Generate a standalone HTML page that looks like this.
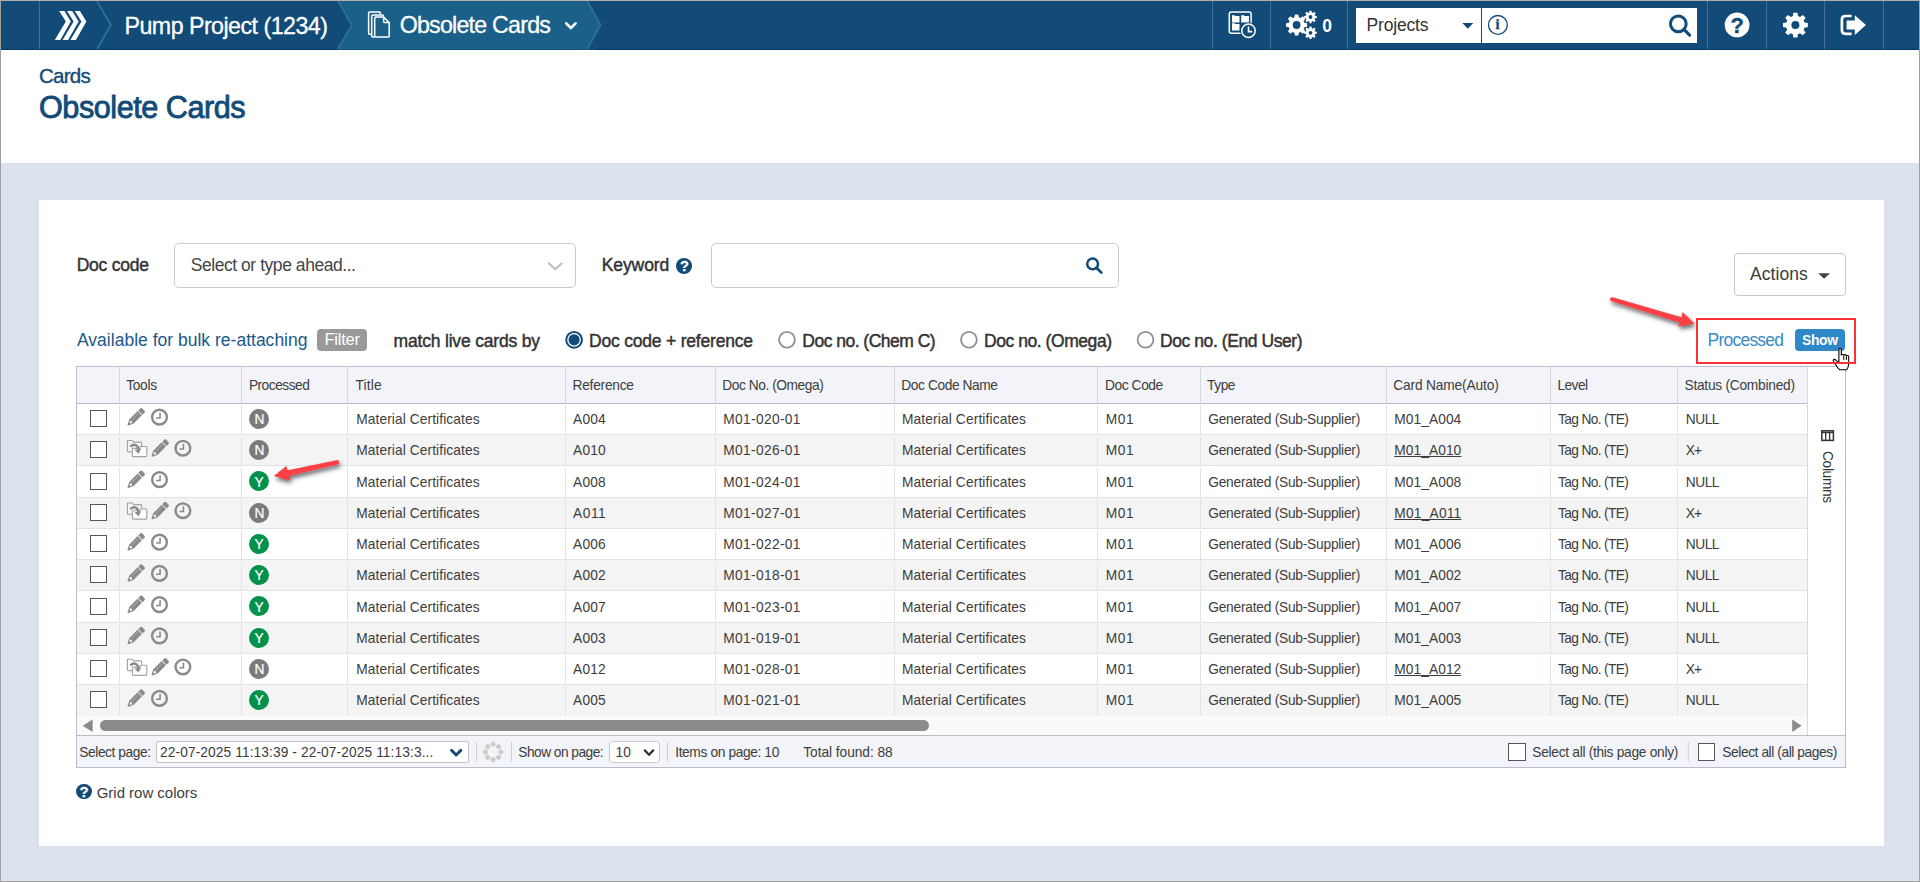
<!DOCTYPE html>
<html><head><meta charset="utf-8"><title>Obsolete Cards</title>
<style>
html,body{margin:0;padding:0}
body{width:1920px;height:882px;position:relative;overflow:hidden;background:#dbe2ee;font-family:"Liberation Sans",sans-serif;}
.a{position:absolute;box-sizing:border-box}
.t{position:absolute;white-space:nowrap;font-family:"Liberation Sans",sans-serif}
svg{position:absolute;overflow:visible}
</style></head><body>

<div class="a " style="left:0px;top:0px;width:1920px;height:50px;background:#124b78;border-bottom:1px solid #003a6b;"></div>
<div class="a " style="left:39px;top:1px;width:1px;height:48px;background:#456d8f;"></div>
<div class="a " style="left:1212px;top:1px;width:1px;height:48px;background:#456d8f;"></div>
<div class="a " style="left:1270px;top:1px;width:1px;height:48px;background:#456d8f;"></div>
<div class="a " style="left:1347px;top:1px;width:1px;height:48px;background:#456d8f;"></div>
<div class="a " style="left:1707px;top:1px;width:1px;height:48px;background:#456d8f;"></div>
<div class="a " style="left:1766px;top:1px;width:1px;height:48px;background:#456d8f;"></div>
<div class="a " style="left:1824px;top:1px;width:1px;height:48px;background:#456d8f;"></div>
<div class="a " style="left:1883px;top:1px;width:1px;height:48px;background:#456d8f;"></div>
<svg width="1920" height="50" style="left:0;top:0" viewBox="0 0 1920 50"><polygon points="338,1 587.2,1 600.5,25 587.2,49 338,49 351.8,25" fill="#1a6088"/><rect x="345" y="49" width="250" height="1" fill="#0d537f"/><polygon points="338,49 338,50 587.5,50 588,49" fill="#0d537f"/><polyline points="97,1 110.8,25 97,49" fill="none" stroke="#2d709e" stroke-width="1.8" stroke-linejoin="round"/><polyline points="338,1 351.8,25 338,49" fill="none" stroke="#2d709e" stroke-width="1.8" stroke-linejoin="round"/><polyline points="587.2,1 600.5,25 587.2,49" fill="none" stroke="#2d709e" stroke-width="1.8" stroke-linejoin="round"/><polygon points="59.20,10.90 64.40,10.90 70.80,21.60 60.30,40.00 54.80,40.00 65.80,21.60" fill="#fff"/><polygon points="67.00,10.90 72.20,10.90 78.60,21.60 68.10,40.00 62.60,40.00 73.60,21.60" fill="#fff"/><polygon points="74.80,10.90 80.00,10.90 86.40,21.60 75.90,40.00 70.40,40.00 81.40,21.60" fill="#fff"/><path d="M370.9 34.2 H369.6 Q368.6 34.2 368.6 33.2 V12.9 Q368.6 11.9 369.6 11.9 H379.4 Q380.4 11.9 380.4 12.9 V13.6" fill="none" stroke="#fff" stroke-width="1.5" stroke-linejoin="round" stroke-linecap="round"/><path d="M374 36.9 H372.7 Q371.7 36.9 371.7 35.9 V15.9 Q371.7 14.9 372.7 14.9 H382.4 Q383.4 14.9 383.4 15.9 V16.2" fill="none" stroke="#fff" stroke-width="1.5" stroke-linejoin="round" stroke-linecap="round"/><path d="M375.7 17 H383.6 L389.2 22.6 V36.1 Q389.2 37.1 388.2 37.1 H375.7 Q374.7 37.1 374.7 36.1 V18 Q374.7 17 375.7 17 Z M383.6 17 V21.6 Q383.6 22.6 384.6 22.6 H389.2" fill="none" stroke="#fff" stroke-width="1.5" stroke-linejoin="round" stroke-linecap="round"/><polyline points="566.2,23.3 570.9,28 575.6,23.3" fill="none" stroke="#fff" stroke-width="2.6" stroke-linecap="round" stroke-linejoin="round"/><rect x="1229.3" y="12" width="21.8" height="21.2" rx="2" ry="2" fill="none" stroke="#fff" stroke-width="1.5"/><path d="M1232 15.2 h2.6 l0.8 0.8 h4.1 v6.4 h-7.5 Z" fill="#fff"/><path d="M1241.2 15.2 h2.6 l0.8 0.8 h4.4 v6.4 h-7.8 Z" fill="#fff"/><path d="M1232 23.3 h2.6 l0.8 0.8 h4.1 v6.4 h-7.5 Z" fill="#fff"/><circle cx="1248.5" cy="30.8" r="8.4" fill="#124b78"/><circle cx="1248.5" cy="30.8" r="6.7" fill="#124b78" stroke="#fff" stroke-width="1.5"/><polyline points="1248.5,26.6 1248.5,31.6 1252.2,31.6" fill="none" stroke="#fff" stroke-width="1.6"/><path d="M1304.40 22.82 L1307.16 23.29 L1307.16 26.71 L1304.40 27.18 L1303.66 28.98 L1305.28 31.26 L1302.86 33.68 L1300.58 32.06 L1298.78 32.80 L1298.31 35.56 L1294.89 35.56 L1294.42 32.80 L1292.62 32.06 L1290.34 33.68 L1287.92 31.26 L1289.54 28.98 L1288.80 27.18 L1286.04 26.71 L1286.04 23.29 L1288.80 22.82 L1289.54 21.02 L1287.92 18.74 L1290.34 16.32 L1292.62 17.94 L1294.42 17.20 L1294.89 14.44 L1298.31 14.44 L1298.78 17.20 L1300.58 17.94 L1302.86 16.32 L1305.28 18.74 L1303.66 21.02Z M1292.70 25.00 a3.90 3.90 0 1 0 7.80 0 a3.90 3.90 0 1 0 -7.80 0Z" fill="#fff" fill-rule="evenodd"/><path d="M1315.03 15.74 L1316.82 15.98 L1316.82 18.02 L1315.03 18.26 L1314.59 19.31 L1315.69 20.74 L1314.24 22.19 L1312.81 21.09 L1311.76 21.53 L1311.52 23.32 L1309.48 23.32 L1309.24 21.53 L1308.19 21.09 L1306.76 22.19 L1305.31 20.74 L1306.41 19.31 L1305.97 18.26 L1304.18 18.02 L1304.18 15.98 L1305.97 15.74 L1306.41 14.69 L1305.31 13.26 L1306.76 11.81 L1308.19 12.91 L1309.24 12.47 L1309.48 10.68 L1311.52 10.68 L1311.76 12.47 L1312.81 12.91 L1314.24 11.81 L1315.69 13.26 L1314.59 14.69Z M1308.60 17.00 a1.90 1.90 0 1 0 3.80 0 a1.90 1.90 0 1 0 -3.80 0Z" fill="#fff" fill-rule="evenodd"/><path d="M1315.03 31.54 L1316.82 31.78 L1316.82 33.82 L1315.03 34.06 L1314.59 35.11 L1315.69 36.54 L1314.24 37.99 L1312.81 36.89 L1311.76 37.33 L1311.52 39.12 L1309.48 39.12 L1309.24 37.33 L1308.19 36.89 L1306.76 37.99 L1305.31 36.54 L1306.41 35.11 L1305.97 34.06 L1304.18 33.82 L1304.18 31.78 L1305.97 31.54 L1306.41 30.49 L1305.31 29.06 L1306.76 27.61 L1308.19 28.71 L1309.24 28.27 L1309.48 26.48 L1311.52 26.48 L1311.76 28.27 L1312.81 28.71 L1314.24 27.61 L1315.69 29.06 L1314.59 30.49Z M1308.60 32.80 a1.90 1.90 0 1 0 3.80 0 a1.90 1.90 0 1 0 -3.80 0Z" fill="#fff" fill-rule="evenodd"/><rect x="1356" y="8" width="125" height="35" fill="#fff"/><rect x="1482" y="8" width="215" height="35" fill="#fff"/><polygon points="1462.3,23 1473.3,23 1467.8,28.8" fill="#124b78"/><circle cx="1497.9" cy="24.9" r="9.4" fill="none" stroke="#124b78" stroke-width="1.3"/><circle cx="1678.3" cy="23.8" r="7.9" fill="none" stroke="#124b78" stroke-width="3"/><line x1="1684.4" y1="29.9" x2="1689.6" y2="35.1" stroke="#124b78" stroke-width="3.2" stroke-linecap="round"/><circle cx="1737.1" cy="24.9" r="12.4" fill="#fff"/><path d="M1804.45 22.57 L1807.84 23.08 L1807.84 27.12 L1804.45 27.63 L1803.59 29.72 L1805.62 32.47 L1802.77 35.32 L1800.02 33.29 L1797.93 34.15 L1797.42 37.54 L1793.38 37.54 L1792.87 34.15 L1790.78 33.29 L1788.03 35.32 L1785.18 32.47 L1787.21 29.72 L1786.35 27.63 L1782.96 27.12 L1782.96 23.08 L1786.35 22.57 L1787.21 20.48 L1785.18 17.73 L1788.03 14.88 L1790.78 16.91 L1792.87 16.05 L1793.38 12.66 L1797.42 12.66 L1797.93 16.05 L1800.02 16.91 L1802.77 14.88 L1805.62 17.73 L1803.59 20.48Z M1791.40 25.10 a4.00 4.00 0 1 0 8.00 0 a4.00 4.00 0 1 0 -8.00 0Z" fill="#fff" fill-rule="evenodd"/><path d="M1851.6 16 H1845.4 Q1841.9 16 1841.9 19.5 V30.3 Q1841.9 33.8 1845.4 33.8 H1851.6" fill="none" stroke="#fff" stroke-width="2.7"/><polygon points="1846.6,20.4 1854.8,20.4 1854.8,15.2 1866,25 1854.8,34.9 1854.8,29.4 1846.6,29.4" fill="#fff"/></svg>
<span class="t " style="left:124.50px;top:10.56px;font-size:23.20px;line-height:30px;color:#fff;letter-spacing:-0.515px;-webkit-text-stroke:0.30px #fff;">Pump Project (1234)</span>
<span class="t " style="left:399.70px;top:10.46px;font-size:23.20px;line-height:30px;color:#fff;letter-spacing:-0.761px;-webkit-text-stroke:0.30px #fff;">Obsolete Cards</span>
<span class="t " style="left:1322.30px;top:15.24px;font-size:17.50px;line-height:23px;color:#fff;font-weight:bold;">0</span>
<span class="t " style="left:1366.60px;top:14.24px;font-size:17.50px;line-height:23px;color:#333;letter-spacing:-0.202px;">Projects</span>
<span class="t " style="left:1495.50px;top:14.98px;font-size:14.50px;line-height:19px;color:#124b78;font-weight:bold;-webkit-text-stroke:0.30px #124b78;font-family:'Liberation Serif',serif;">i</span>
<span class="t " style="left:1730.60px;top:10.68px;font-size:22.00px;line-height:29px;color:#124b78;font-weight:bold;-webkit-text-stroke:0.40px #124b78;">?</span>
<div class="a " style="left:0px;top:50px;width:1920px;height:113px;background:#fff;"></div>
<span class="t " style="left:39.00px;top:61.86px;font-size:20.60px;line-height:27px;color:#124b78;letter-spacing:-0.813px;-webkit-text-stroke:0.35px #124b78;">Cards</span>
<span class="t " style="left:39.00px;top:87.20px;font-size:30.60px;line-height:40px;color:#124b78;letter-spacing:-0.454px;-webkit-text-stroke:0.85px #124b78;">Obsolete Cards</span>
<div class="a " style="left:39px;top:200px;width:1845px;height:646px;background:#fff;"></div>
<span class="t " style="left:76.70px;top:254.44px;font-size:17.50px;line-height:23px;color:#333;letter-spacing:-0.233px;-webkit-text-stroke:0.45px #333;">Doc code</span>
<div class="a " style="left:174px;top:243px;width:402px;height:45px;border:1px solid #ccc;border-radius:5px;background:#fff;"></div>
<span class="t " style="left:190.70px;top:254.44px;font-size:17.50px;line-height:23px;color:#444;letter-spacing:-0.446px;">Select or type ahead...</span>
<svg width="20" height="12" style="left:546px;top:260px" viewBox="546 260 20 12"><polyline points="548.8,263.3 555.3,269.3 561.8,263.3" fill="none" stroke="#bcbcbc" stroke-width="1.9" stroke-linecap="round" stroke-linejoin="round"/></svg>
<span class="t " style="left:601.70px;top:254.34px;font-size:17.50px;line-height:23px;color:#333;letter-spacing:-0.081px;-webkit-text-stroke:0.45px #333;">Keyword</span>
<div class="a " style="left:676px;top:257.8px;width:16.2px;height:15.8px;border-radius:50%;background:#124b78;"></div>
<span class="t " style="left:680.00px;top:256.54px;font-size:14.60px;line-height:19px;color:#fff;font-weight:bold;-webkit-text-stroke:0.30px #fff;">?</span>
<div class="a " style="left:711px;top:243px;width:408px;height:45px;border:1px solid #ccc;border-radius:5px;background:#fff;"></div>
<svg width="24" height="24" style="left:1082px;top:254px" viewBox="1082 254 24 24"><circle cx="1092.6" cy="263.9" r="5.4" fill="none" stroke="#124b78" stroke-width="2.5"/><line x1="1096.9" y1="268.2" x2="1101.4" y2="272.6" stroke="#124b78" stroke-width="2.7" stroke-linecap="round"/></svg>
<div class="a " style="left:1734px;top:253px;width:112px;height:43px;border:1px solid #c8c8c8;border-radius:4px;background:#fff;"></div>
<span class="t " style="left:1750.00px;top:263.14px;font-size:17.50px;line-height:23px;color:#3c3c3c;letter-spacing:0.052px;">Actions</span>
<svg width="14" height="8" style="left:1817px;top:272px" viewBox="1817 272 14 8"><polygon points="1818.2,273.3 1830,273.3 1824.1,278.8" fill="#444"/></svg>
<span class="t " style="left:77.00px;top:329.24px;font-size:17.50px;line-height:23px;color:#1a598a;letter-spacing:0.009px;">Available for bulk re-attaching</span>
<div class="a " style="left:317px;top:329px;width:50px;height:22px;background:#999;border-radius:4px;"></div>
<span class="t " style="left:324.50px;top:329.15px;font-size:16.60px;line-height:22px;color:#fff;letter-spacing:-0.278px;">Filter</span>
<span class="t " style="left:393.50px;top:330.14px;font-size:17.50px;line-height:23px;color:#333;letter-spacing:-0.182px;-webkit-text-stroke:0.45px #333;">match live cards by</span>
<svg width="760" height="24" style="left:560px;top:328px" viewBox="560 328 760 24"><circle cx="574.1" cy="339.8" r="7.9" fill="#fff" stroke="#124b78" stroke-width="2"/><circle cx="574.1" cy="339.8" r="5.6" fill="#124b78"/><circle cx="787.0" cy="339.8" r="7.9" fill="#fff" stroke="#8e8e9c" stroke-width="1.8"/><circle cx="968.9" cy="339.8" r="7.9" fill="#fff" stroke="#8e8e9c" stroke-width="1.8"/><circle cx="1145.5" cy="339.8" r="7.9" fill="#fff" stroke="#8e8e9c" stroke-width="1.8"/></svg>
<span class="t " style="left:589.00px;top:330.14px;font-size:17.50px;line-height:23px;color:#333;letter-spacing:-0.200px;-webkit-text-stroke:0.45px #333;">Doc code + reference</span>
<span class="t " style="left:802.30px;top:330.14px;font-size:17.50px;line-height:23px;color:#333;letter-spacing:-0.514px;-webkit-text-stroke:0.45px #333;">Doc no. (Chem C)</span>
<span class="t " style="left:984.00px;top:330.14px;font-size:17.50px;line-height:23px;color:#333;letter-spacing:-0.444px;-webkit-text-stroke:0.45px #333;">Doc no. (Omega)</span>
<span class="t " style="left:1160.00px;top:330.14px;font-size:17.50px;line-height:23px;color:#333;letter-spacing:-0.428px;-webkit-text-stroke:0.45px #333;">Doc no. (End User)</span>
<span class="t " style="left:1707.60px;top:328.64px;font-size:17.50px;line-height:23px;color:#3a8ac6;letter-spacing:-0.785px;">Processed</span>
<div class="a " style="left:1795px;top:329px;width:50px;height:22.2px;background:#2f88c8;border-radius:4px;"></div>
<span class="t " style="left:1802.00px;top:332.12px;font-size:13.80px;line-height:18px;color:#fff;letter-spacing:-0.266px;font-weight:bold;">Show</span>
<div class="a " style="left:76px;top:366px;width:1770px;height:402px;border:1px solid #b6becc;background:#fff;"></div>
<div class="a " style="left:77px;top:367px;width:1730px;height:36px;background:#f2f4f9;"></div>
<div class="a " style="left:77px;top:403px;width:1730px;height:1px;background:#b6becc;"></div>
<span class="t " style="left:126.25px;top:377.24px;font-size:13.75px;line-height:18px;color:#3d3d3d;letter-spacing:-0.337px;">Tools</span>
<span class="t " style="left:248.90px;top:377.24px;font-size:13.75px;line-height:18px;color:#3d3d3d;letter-spacing:-0.508px;">Processed</span>
<span class="t " style="left:355.50px;top:377.24px;font-size:13.75px;line-height:18px;color:#3d3d3d;letter-spacing:0.196px;">Title</span>
<span class="t " style="left:572.50px;top:377.24px;font-size:13.75px;line-height:18px;color:#3d3d3d;letter-spacing:-0.243px;">Reference</span>
<span class="t " style="left:722.30px;top:377.24px;font-size:13.75px;line-height:18px;color:#3d3d3d;letter-spacing:-0.446px;">Doc No. (Omega)</span>
<span class="t " style="left:901.25px;top:377.24px;font-size:13.75px;line-height:18px;color:#3d3d3d;letter-spacing:-0.408px;">Doc Code Name</span>
<span class="t " style="left:1105.00px;top:377.24px;font-size:13.75px;line-height:18px;color:#3d3d3d;letter-spacing:-0.414px;">Doc Code</span>
<span class="t " style="left:1207.00px;top:377.24px;font-size:13.75px;line-height:18px;color:#3d3d3d;letter-spacing:-0.437px;">Type</span>
<span class="t " style="left:1393.25px;top:377.24px;font-size:13.75px;line-height:18px;color:#3d3d3d;letter-spacing:-0.161px;">Card Name(Auto)</span>
<span class="t " style="left:1557.50px;top:377.24px;font-size:13.75px;line-height:18px;color:#3d3d3d;letter-spacing:-0.593px;">Level</span>
<span class="t " style="left:1684.50px;top:377.24px;font-size:13.75px;line-height:18px;color:#3d3d3d;letter-spacing:-0.259px;">Status (Combined)</span>
<div class="a " style="left:77px;top:403.75px;width:1730px;height:31.25px;background:#fff;border-bottom:1px solid #dfe4ec;"></div>
<div class="a " style="left:90px;top:410.15px;width:17px;height:17px;border:1px solid #55555b;background:#fff;"></div>
<svg width="26" height="26" style="left:123px;top:405px" viewBox="0 0 26 26"><g transform="translate(12.80 12.20) rotate(45)" fill="#8a8a8a"><path d="M-3 -6.5 V-9.5 Q-3 -10.7 -1.8 -10.7 H1.8 Q3 -10.7 3 -9.5 V-6.5 Z"/><path d="M-3 -5.6 H3 V6.0 L0.7 11.0 Q0 11.8 -0.7 11.0 L-3 6.0 Z"/><line x1="-1.0" y1="-4.8" x2="-1.0" y2="5.0" stroke="#c4c4c4" stroke-width="0.6"/><path d="M-1.5 6.6 L0 5.8 L1.5 6.6 L0 8.8 Z" fill="#fff"/></g></svg>
<svg width="20" height="20" style="left:150px;top:408px" viewBox="0 0 20 20"><g transform="translate(0.50 0.15)"><circle cx="9" cy="9" r="7.35" fill="none" stroke="#8a8a8a" stroke-width="2.4"/><polyline points="9.55,4.5 9.55,9.8 5.6,9.8" fill="none" stroke="#8a8a8a" stroke-width="1.6"/></g></svg>
<div class="a " style="left:249px;top:408.85px;width:20px;height:20px;border-radius:50%;background:#7b7b7b;"></div>
<span class="t " style="left:254.40px;top:411.09px;font-size:13.75px;line-height:18px;color:#fff;-webkit-text-stroke:0.20px #fff;">N</span>
<span class="t " style="left:356.25px;top:411.24px;font-size:13.75px;line-height:18px;color:#3d3d3d;letter-spacing:0.088px;">Material Certificates</span>
<span class="t " style="left:573.00px;top:411.24px;font-size:13.75px;line-height:18px;color:#3d3d3d;letter-spacing:0.212px;">A004</span>
<span class="t " style="left:723.25px;top:411.24px;font-size:13.75px;line-height:18px;color:#3d3d3d;letter-spacing:0.345px;">M01-020-01</span>
<span class="t " style="left:902.00px;top:411.24px;font-size:13.75px;line-height:18px;color:#3d3d3d;letter-spacing:0.125px;">Material Certificates</span>
<span class="t " style="left:1105.75px;top:411.24px;font-size:13.75px;line-height:18px;color:#3d3d3d;letter-spacing:0.625px;">M01</span>
<span class="t " style="left:1208.20px;top:411.24px;font-size:13.75px;line-height:18px;color:#3d3d3d;letter-spacing:-0.233px;">Generated (Sub-Supplier)</span>
<span class="t " style="left:1394.25px;top:411.24px;font-size:13.75px;line-height:18px;color:#3d3d3d;letter-spacing:0.070px;">M01_A004</span>
<span class="t " style="left:1558.00px;top:411.24px;font-size:13.75px;line-height:18px;color:#3d3d3d;letter-spacing:-0.653px;">Tag No. (TE)</span>
<span class="t " style="left:1685.75px;top:411.24px;font-size:13.75px;line-height:18px;color:#3d3d3d;letter-spacing:-0.468px;">NULL</span>
<div class="a " style="left:77px;top:435px;width:1730px;height:31.25px;background:#f4f4f4;border-bottom:1px solid #dfe4ec;"></div>
<div class="a " style="left:90px;top:441.4px;width:17px;height:17px;border:1px solid #55555b;background:#fff;"></div>
<svg width="24" height="20" style="left:126px;top:439px" viewBox="0 0 24 20"><g transform="translate(0.80 0.90)"><path d="M5.6 11.9 H1.4 Q0.6 11.9 0.6 11.1 V1.4 Q0.6 0.6 1.4 0.6 H5.6 L6.9 2.2 H14 Q14.8 2.2 14.8 3 V6" fill="none" stroke="#a3a3a3" stroke-width="1.15"/><path d="M6.4 8.4 H12.6 L13.9 6.6 H19.2 Q20 6.6 20 7.4 V15.9 Q20 16.7 19.2 16.7 H6.4 Q5.6 16.7 5.6 15.9 V9.2 Q5.6 8.4 6.4 8.4Z" fill="#fff" fill-opacity="0.9" stroke="#a3a3a3" stroke-width="1.15"/><path d="M3.6 6.9 Q6.2 3.6 9.6 5.6 Q11.4 7 11.6 9.6" fill="none" stroke="#8a8a8a" stroke-width="2.5"/><path d="M7.7 10.1 L14.5 8.7 L11.7 13.9 Z" fill="#8a8a8a"/></g></svg>
<svg width="26" height="26" style="left:147px;top:436px" viewBox="0 0 26 26"><g transform="translate(12.80 12.45) rotate(45)" fill="#8a8a8a"><path d="M-3 -6.5 V-9.5 Q-3 -10.7 -1.8 -10.7 H1.8 Q3 -10.7 3 -9.5 V-6.5 Z"/><path d="M-3 -5.6 H3 V6.0 L0.7 11.0 Q0 11.8 -0.7 11.0 L-3 6.0 Z"/><line x1="-1.0" y1="-4.8" x2="-1.0" y2="5.0" stroke="#c4c4c4" stroke-width="0.6"/><path d="M-1.5 6.6 L0 5.8 L1.5 6.6 L0 8.8 Z" fill="#fff"/></g></svg>
<svg width="20" height="20" style="left:173px;top:439px" viewBox="0 0 20 20"><g transform="translate(0.90 0.20)"><circle cx="9" cy="9" r="7.35" fill="none" stroke="#8a8a8a" stroke-width="2.4"/><polyline points="9.55,4.5 9.55,9.8 5.6,9.8" fill="none" stroke="#8a8a8a" stroke-width="1.6"/></g></svg>
<div class="a " style="left:249px;top:440.1px;width:20px;height:20px;border-radius:50%;background:#7b7b7b;"></div>
<span class="t " style="left:254.40px;top:442.34px;font-size:13.75px;line-height:18px;color:#fff;-webkit-text-stroke:0.20px #fff;">N</span>
<span class="t " style="left:356.25px;top:442.49px;font-size:13.75px;line-height:18px;color:#3d3d3d;letter-spacing:0.088px;">Material Certificates</span>
<span class="t " style="left:573.00px;top:442.49px;font-size:13.75px;line-height:18px;color:#3d3d3d;letter-spacing:0.212px;">A010</span>
<span class="t " style="left:723.25px;top:442.49px;font-size:13.75px;line-height:18px;color:#3d3d3d;letter-spacing:0.345px;">M01-026-01</span>
<span class="t " style="left:902.00px;top:442.49px;font-size:13.75px;line-height:18px;color:#3d3d3d;letter-spacing:0.125px;">Material Certificates</span>
<span class="t " style="left:1105.75px;top:442.49px;font-size:13.75px;line-height:18px;color:#3d3d3d;letter-spacing:0.625px;">M01</span>
<span class="t " style="left:1208.20px;top:442.49px;font-size:13.75px;line-height:18px;color:#3d3d3d;letter-spacing:-0.233px;">Generated (Sub-Supplier)</span>
<span class="t " style="left:1394.25px;top:442.49px;font-size:13.75px;line-height:18px;color:#3d3d3d;letter-spacing:0.070px;text-decoration:underline;text-underline-offset:0.6px;text-decoration-thickness:1px;">M01_A010</span>
<span class="t " style="left:1558.00px;top:442.49px;font-size:13.75px;line-height:18px;color:#3d3d3d;letter-spacing:-0.653px;">Tag No. (TE)</span>
<span class="t " style="left:1685.75px;top:442.49px;font-size:13.75px;line-height:18px;color:#3d3d3d;letter-spacing:-0.951px;">X+</span>
<div class="a " style="left:77px;top:466.25px;width:1730px;height:31.25px;background:#fff;border-bottom:1px solid #dfe4ec;"></div>
<div class="a " style="left:90px;top:472.65px;width:17px;height:17px;border:1px solid #55555b;background:#fff;"></div>
<svg width="26" height="26" style="left:123px;top:467px" viewBox="0 0 26 26"><g transform="translate(12.80 12.70) rotate(45)" fill="#8a8a8a"><path d="M-3 -6.5 V-9.5 Q-3 -10.7 -1.8 -10.7 H1.8 Q3 -10.7 3 -9.5 V-6.5 Z"/><path d="M-3 -5.6 H3 V6.0 L0.7 11.0 Q0 11.8 -0.7 11.0 L-3 6.0 Z"/><line x1="-1.0" y1="-4.8" x2="-1.0" y2="5.0" stroke="#c4c4c4" stroke-width="0.6"/><path d="M-1.5 6.6 L0 5.8 L1.5 6.6 L0 8.8 Z" fill="#fff"/></g></svg>
<svg width="20" height="20" style="left:150px;top:470px" viewBox="0 0 20 20"><g transform="translate(0.50 0.65)"><circle cx="9" cy="9" r="7.35" fill="none" stroke="#8a8a8a" stroke-width="2.4"/><polyline points="9.55,4.5 9.55,9.8 5.6,9.8" fill="none" stroke="#8a8a8a" stroke-width="1.6"/></g></svg>
<div class="a " style="left:249px;top:471.35px;width:20px;height:20px;border-radius:50%;background:#00914a;"></div>
<span class="t " style="left:254.60px;top:473.59px;font-size:13.75px;line-height:18px;color:#fff;-webkit-text-stroke:0.20px #fff;">Y</span>
<span class="t " style="left:356.25px;top:473.74px;font-size:13.75px;line-height:18px;color:#3d3d3d;letter-spacing:0.088px;">Material Certificates</span>
<span class="t " style="left:573.00px;top:473.74px;font-size:13.75px;line-height:18px;color:#3d3d3d;letter-spacing:0.212px;">A008</span>
<span class="t " style="left:723.25px;top:473.74px;font-size:13.75px;line-height:18px;color:#3d3d3d;letter-spacing:0.345px;">M01-024-01</span>
<span class="t " style="left:902.00px;top:473.74px;font-size:13.75px;line-height:18px;color:#3d3d3d;letter-spacing:0.125px;">Material Certificates</span>
<span class="t " style="left:1105.75px;top:473.74px;font-size:13.75px;line-height:18px;color:#3d3d3d;letter-spacing:0.625px;">M01</span>
<span class="t " style="left:1208.20px;top:473.74px;font-size:13.75px;line-height:18px;color:#3d3d3d;letter-spacing:-0.233px;">Generated (Sub-Supplier)</span>
<span class="t " style="left:1394.25px;top:473.74px;font-size:13.75px;line-height:18px;color:#3d3d3d;letter-spacing:0.070px;">M01_A008</span>
<span class="t " style="left:1558.00px;top:473.74px;font-size:13.75px;line-height:18px;color:#3d3d3d;letter-spacing:-0.653px;">Tag No. (TE)</span>
<span class="t " style="left:1685.75px;top:473.74px;font-size:13.75px;line-height:18px;color:#3d3d3d;letter-spacing:-0.468px;">NULL</span>
<div class="a " style="left:77px;top:497.5px;width:1730px;height:31.25px;background:#f4f4f4;border-bottom:1px solid #dfe4ec;"></div>
<div class="a " style="left:90px;top:503.9px;width:17px;height:17px;border:1px solid #55555b;background:#fff;"></div>
<svg width="24" height="20" style="left:126px;top:502px" viewBox="0 0 24 20"><g transform="translate(0.80 0.40)"><path d="M5.6 11.9 H1.4 Q0.6 11.9 0.6 11.1 V1.4 Q0.6 0.6 1.4 0.6 H5.6 L6.9 2.2 H14 Q14.8 2.2 14.8 3 V6" fill="none" stroke="#a3a3a3" stroke-width="1.15"/><path d="M6.4 8.4 H12.6 L13.9 6.6 H19.2 Q20 6.6 20 7.4 V15.9 Q20 16.7 19.2 16.7 H6.4 Q5.6 16.7 5.6 15.9 V9.2 Q5.6 8.4 6.4 8.4Z" fill="#fff" fill-opacity="0.9" stroke="#a3a3a3" stroke-width="1.15"/><path d="M3.6 6.9 Q6.2 3.6 9.6 5.6 Q11.4 7 11.6 9.6" fill="none" stroke="#8a8a8a" stroke-width="2.5"/><path d="M7.7 10.1 L14.5 8.7 L11.7 13.9 Z" fill="#8a8a8a"/></g></svg>
<svg width="26" height="26" style="left:147px;top:498px" viewBox="0 0 26 26"><g transform="translate(12.80 12.95) rotate(45)" fill="#8a8a8a"><path d="M-3 -6.5 V-9.5 Q-3 -10.7 -1.8 -10.7 H1.8 Q3 -10.7 3 -9.5 V-6.5 Z"/><path d="M-3 -5.6 H3 V6.0 L0.7 11.0 Q0 11.8 -0.7 11.0 L-3 6.0 Z"/><line x1="-1.0" y1="-4.8" x2="-1.0" y2="5.0" stroke="#c4c4c4" stroke-width="0.6"/><path d="M-1.5 6.6 L0 5.8 L1.5 6.6 L0 8.8 Z" fill="#fff"/></g></svg>
<svg width="20" height="20" style="left:173px;top:501px" viewBox="0 0 20 20"><g transform="translate(0.90 0.70)"><circle cx="9" cy="9" r="7.35" fill="none" stroke="#8a8a8a" stroke-width="2.4"/><polyline points="9.55,4.5 9.55,9.8 5.6,9.8" fill="none" stroke="#8a8a8a" stroke-width="1.6"/></g></svg>
<div class="a " style="left:249px;top:502.6px;width:20px;height:20px;border-radius:50%;background:#7b7b7b;"></div>
<span class="t " style="left:254.40px;top:504.84px;font-size:13.75px;line-height:18px;color:#fff;-webkit-text-stroke:0.20px #fff;">N</span>
<span class="t " style="left:356.25px;top:504.99px;font-size:13.75px;line-height:18px;color:#3d3d3d;letter-spacing:0.088px;">Material Certificates</span>
<span class="t " style="left:573.00px;top:504.99px;font-size:13.75px;line-height:18px;color:#3d3d3d;letter-spacing:0.552px;">A011</span>
<span class="t " style="left:723.25px;top:504.99px;font-size:13.75px;line-height:18px;color:#3d3d3d;letter-spacing:0.345px;">M01-027-01</span>
<span class="t " style="left:902.00px;top:504.99px;font-size:13.75px;line-height:18px;color:#3d3d3d;letter-spacing:0.125px;">Material Certificates</span>
<span class="t " style="left:1105.75px;top:504.99px;font-size:13.75px;line-height:18px;color:#3d3d3d;letter-spacing:0.625px;">M01</span>
<span class="t " style="left:1208.20px;top:504.99px;font-size:13.75px;line-height:18px;color:#3d3d3d;letter-spacing:-0.233px;">Generated (Sub-Supplier)</span>
<span class="t " style="left:1394.25px;top:504.99px;font-size:13.75px;line-height:18px;color:#3d3d3d;letter-spacing:0.216px;text-decoration:underline;text-underline-offset:0.6px;text-decoration-thickness:1px;">M01_A011</span>
<span class="t " style="left:1558.00px;top:504.99px;font-size:13.75px;line-height:18px;color:#3d3d3d;letter-spacing:-0.653px;">Tag No. (TE)</span>
<span class="t " style="left:1685.75px;top:504.99px;font-size:13.75px;line-height:18px;color:#3d3d3d;letter-spacing:-0.951px;">X+</span>
<div class="a " style="left:77px;top:528.75px;width:1730px;height:31.25px;background:#fff;border-bottom:1px solid #dfe4ec;"></div>
<div class="a " style="left:90px;top:535.15px;width:17px;height:17px;border:1px solid #55555b;background:#fff;"></div>
<svg width="26" height="26" style="left:123px;top:530px" viewBox="0 0 26 26"><g transform="translate(12.80 12.20) rotate(45)" fill="#8a8a8a"><path d="M-3 -6.5 V-9.5 Q-3 -10.7 -1.8 -10.7 H1.8 Q3 -10.7 3 -9.5 V-6.5 Z"/><path d="M-3 -5.6 H3 V6.0 L0.7 11.0 Q0 11.8 -0.7 11.0 L-3 6.0 Z"/><line x1="-1.0" y1="-4.8" x2="-1.0" y2="5.0" stroke="#c4c4c4" stroke-width="0.6"/><path d="M-1.5 6.6 L0 5.8 L1.5 6.6 L0 8.8 Z" fill="#fff"/></g></svg>
<svg width="20" height="20" style="left:150px;top:533px" viewBox="0 0 20 20"><g transform="translate(0.50 0.15)"><circle cx="9" cy="9" r="7.35" fill="none" stroke="#8a8a8a" stroke-width="2.4"/><polyline points="9.55,4.5 9.55,9.8 5.6,9.8" fill="none" stroke="#8a8a8a" stroke-width="1.6"/></g></svg>
<div class="a " style="left:249px;top:533.85px;width:20px;height:20px;border-radius:50%;background:#00914a;"></div>
<span class="t " style="left:254.60px;top:536.09px;font-size:13.75px;line-height:18px;color:#fff;-webkit-text-stroke:0.20px #fff;">Y</span>
<span class="t " style="left:356.25px;top:536.24px;font-size:13.75px;line-height:18px;color:#3d3d3d;letter-spacing:0.088px;">Material Certificates</span>
<span class="t " style="left:573.00px;top:536.24px;font-size:13.75px;line-height:18px;color:#3d3d3d;letter-spacing:0.212px;">A006</span>
<span class="t " style="left:723.25px;top:536.24px;font-size:13.75px;line-height:18px;color:#3d3d3d;letter-spacing:0.345px;">M01-022-01</span>
<span class="t " style="left:902.00px;top:536.24px;font-size:13.75px;line-height:18px;color:#3d3d3d;letter-spacing:0.125px;">Material Certificates</span>
<span class="t " style="left:1105.75px;top:536.24px;font-size:13.75px;line-height:18px;color:#3d3d3d;letter-spacing:0.625px;">M01</span>
<span class="t " style="left:1208.20px;top:536.24px;font-size:13.75px;line-height:18px;color:#3d3d3d;letter-spacing:-0.233px;">Generated (Sub-Supplier)</span>
<span class="t " style="left:1394.25px;top:536.24px;font-size:13.75px;line-height:18px;color:#3d3d3d;letter-spacing:0.070px;">M01_A006</span>
<span class="t " style="left:1558.00px;top:536.24px;font-size:13.75px;line-height:18px;color:#3d3d3d;letter-spacing:-0.653px;">Tag No. (TE)</span>
<span class="t " style="left:1685.75px;top:536.24px;font-size:13.75px;line-height:18px;color:#3d3d3d;letter-spacing:-0.468px;">NULL</span>
<div class="a " style="left:77px;top:560px;width:1730px;height:31.25px;background:#f4f4f4;border-bottom:1px solid #dfe4ec;"></div>
<div class="a " style="left:90px;top:566.4px;width:17px;height:17px;border:1px solid #55555b;background:#fff;"></div>
<svg width="26" height="26" style="left:123px;top:561px" viewBox="0 0 26 26"><g transform="translate(12.80 12.45) rotate(45)" fill="#8a8a8a"><path d="M-3 -6.5 V-9.5 Q-3 -10.7 -1.8 -10.7 H1.8 Q3 -10.7 3 -9.5 V-6.5 Z"/><path d="M-3 -5.6 H3 V6.0 L0.7 11.0 Q0 11.8 -0.7 11.0 L-3 6.0 Z"/><line x1="-1.0" y1="-4.8" x2="-1.0" y2="5.0" stroke="#c4c4c4" stroke-width="0.6"/><path d="M-1.5 6.6 L0 5.8 L1.5 6.6 L0 8.8 Z" fill="#fff"/></g></svg>
<svg width="20" height="20" style="left:150px;top:564px" viewBox="0 0 20 20"><g transform="translate(0.50 0.40)"><circle cx="9" cy="9" r="7.35" fill="none" stroke="#8a8a8a" stroke-width="2.4"/><polyline points="9.55,4.5 9.55,9.8 5.6,9.8" fill="none" stroke="#8a8a8a" stroke-width="1.6"/></g></svg>
<div class="a " style="left:249px;top:565.1px;width:20px;height:20px;border-radius:50%;background:#00914a;"></div>
<span class="t " style="left:254.60px;top:567.34px;font-size:13.75px;line-height:18px;color:#fff;-webkit-text-stroke:0.20px #fff;">Y</span>
<span class="t " style="left:356.25px;top:567.49px;font-size:13.75px;line-height:18px;color:#3d3d3d;letter-spacing:0.088px;">Material Certificates</span>
<span class="t " style="left:573.00px;top:567.49px;font-size:13.75px;line-height:18px;color:#3d3d3d;letter-spacing:0.212px;">A002</span>
<span class="t " style="left:723.25px;top:567.49px;font-size:13.75px;line-height:18px;color:#3d3d3d;letter-spacing:0.345px;">M01-018-01</span>
<span class="t " style="left:902.00px;top:567.49px;font-size:13.75px;line-height:18px;color:#3d3d3d;letter-spacing:0.125px;">Material Certificates</span>
<span class="t " style="left:1105.75px;top:567.49px;font-size:13.75px;line-height:18px;color:#3d3d3d;letter-spacing:0.625px;">M01</span>
<span class="t " style="left:1208.20px;top:567.49px;font-size:13.75px;line-height:18px;color:#3d3d3d;letter-spacing:-0.233px;">Generated (Sub-Supplier)</span>
<span class="t " style="left:1394.25px;top:567.49px;font-size:13.75px;line-height:18px;color:#3d3d3d;letter-spacing:0.070px;">M01_A002</span>
<span class="t " style="left:1558.00px;top:567.49px;font-size:13.75px;line-height:18px;color:#3d3d3d;letter-spacing:-0.653px;">Tag No. (TE)</span>
<span class="t " style="left:1685.75px;top:567.49px;font-size:13.75px;line-height:18px;color:#3d3d3d;letter-spacing:-0.468px;">NULL</span>
<div class="a " style="left:77px;top:591.25px;width:1730px;height:31.25px;background:#fff;border-bottom:1px solid #dfe4ec;"></div>
<div class="a " style="left:90px;top:597.65px;width:17px;height:17px;border:1px solid #55555b;background:#fff;"></div>
<svg width="26" height="26" style="left:123px;top:592px" viewBox="0 0 26 26"><g transform="translate(12.80 12.70) rotate(45)" fill="#8a8a8a"><path d="M-3 -6.5 V-9.5 Q-3 -10.7 -1.8 -10.7 H1.8 Q3 -10.7 3 -9.5 V-6.5 Z"/><path d="M-3 -5.6 H3 V6.0 L0.7 11.0 Q0 11.8 -0.7 11.0 L-3 6.0 Z"/><line x1="-1.0" y1="-4.8" x2="-1.0" y2="5.0" stroke="#c4c4c4" stroke-width="0.6"/><path d="M-1.5 6.6 L0 5.8 L1.5 6.6 L0 8.8 Z" fill="#fff"/></g></svg>
<svg width="20" height="20" style="left:150px;top:595px" viewBox="0 0 20 20"><g transform="translate(0.50 0.65)"><circle cx="9" cy="9" r="7.35" fill="none" stroke="#8a8a8a" stroke-width="2.4"/><polyline points="9.55,4.5 9.55,9.8 5.6,9.8" fill="none" stroke="#8a8a8a" stroke-width="1.6"/></g></svg>
<div class="a " style="left:249px;top:596.35px;width:20px;height:20px;border-radius:50%;background:#00914a;"></div>
<span class="t " style="left:254.60px;top:598.59px;font-size:13.75px;line-height:18px;color:#fff;-webkit-text-stroke:0.20px #fff;">Y</span>
<span class="t " style="left:356.25px;top:598.74px;font-size:13.75px;line-height:18px;color:#3d3d3d;letter-spacing:0.088px;">Material Certificates</span>
<span class="t " style="left:573.00px;top:598.74px;font-size:13.75px;line-height:18px;color:#3d3d3d;letter-spacing:0.212px;">A007</span>
<span class="t " style="left:723.25px;top:598.74px;font-size:13.75px;line-height:18px;color:#3d3d3d;letter-spacing:0.345px;">M01-023-01</span>
<span class="t " style="left:902.00px;top:598.74px;font-size:13.75px;line-height:18px;color:#3d3d3d;letter-spacing:0.125px;">Material Certificates</span>
<span class="t " style="left:1105.75px;top:598.74px;font-size:13.75px;line-height:18px;color:#3d3d3d;letter-spacing:0.625px;">M01</span>
<span class="t " style="left:1208.20px;top:598.74px;font-size:13.75px;line-height:18px;color:#3d3d3d;letter-spacing:-0.233px;">Generated (Sub-Supplier)</span>
<span class="t " style="left:1394.25px;top:598.74px;font-size:13.75px;line-height:18px;color:#3d3d3d;letter-spacing:0.070px;">M01_A007</span>
<span class="t " style="left:1558.00px;top:598.74px;font-size:13.75px;line-height:18px;color:#3d3d3d;letter-spacing:-0.653px;">Tag No. (TE)</span>
<span class="t " style="left:1685.75px;top:598.74px;font-size:13.75px;line-height:18px;color:#3d3d3d;letter-spacing:-0.468px;">NULL</span>
<div class="a " style="left:77px;top:622.5px;width:1730px;height:31.25px;background:#f4f4f4;border-bottom:1px solid #dfe4ec;"></div>
<div class="a " style="left:90px;top:628.9px;width:17px;height:17px;border:1px solid #55555b;background:#fff;"></div>
<svg width="26" height="26" style="left:123px;top:623px" viewBox="0 0 26 26"><g transform="translate(12.80 12.95) rotate(45)" fill="#8a8a8a"><path d="M-3 -6.5 V-9.5 Q-3 -10.7 -1.8 -10.7 H1.8 Q3 -10.7 3 -9.5 V-6.5 Z"/><path d="M-3 -5.6 H3 V6.0 L0.7 11.0 Q0 11.8 -0.7 11.0 L-3 6.0 Z"/><line x1="-1.0" y1="-4.8" x2="-1.0" y2="5.0" stroke="#c4c4c4" stroke-width="0.6"/><path d="M-1.5 6.6 L0 5.8 L1.5 6.6 L0 8.8 Z" fill="#fff"/></g></svg>
<svg width="20" height="20" style="left:150px;top:626px" viewBox="0 0 20 20"><g transform="translate(0.50 0.90)"><circle cx="9" cy="9" r="7.35" fill="none" stroke="#8a8a8a" stroke-width="2.4"/><polyline points="9.55,4.5 9.55,9.8 5.6,9.8" fill="none" stroke="#8a8a8a" stroke-width="1.6"/></g></svg>
<div class="a " style="left:249px;top:627.6px;width:20px;height:20px;border-radius:50%;background:#00914a;"></div>
<span class="t " style="left:254.60px;top:629.84px;font-size:13.75px;line-height:18px;color:#fff;-webkit-text-stroke:0.20px #fff;">Y</span>
<span class="t " style="left:356.25px;top:629.99px;font-size:13.75px;line-height:18px;color:#3d3d3d;letter-spacing:0.088px;">Material Certificates</span>
<span class="t " style="left:573.00px;top:629.99px;font-size:13.75px;line-height:18px;color:#3d3d3d;letter-spacing:0.212px;">A003</span>
<span class="t " style="left:723.25px;top:629.99px;font-size:13.75px;line-height:18px;color:#3d3d3d;letter-spacing:0.345px;">M01-019-01</span>
<span class="t " style="left:902.00px;top:629.99px;font-size:13.75px;line-height:18px;color:#3d3d3d;letter-spacing:0.125px;">Material Certificates</span>
<span class="t " style="left:1105.75px;top:629.99px;font-size:13.75px;line-height:18px;color:#3d3d3d;letter-spacing:0.625px;">M01</span>
<span class="t " style="left:1208.20px;top:629.99px;font-size:13.75px;line-height:18px;color:#3d3d3d;letter-spacing:-0.233px;">Generated (Sub-Supplier)</span>
<span class="t " style="left:1394.25px;top:629.99px;font-size:13.75px;line-height:18px;color:#3d3d3d;letter-spacing:0.070px;">M01_A003</span>
<span class="t " style="left:1558.00px;top:629.99px;font-size:13.75px;line-height:18px;color:#3d3d3d;letter-spacing:-0.653px;">Tag No. (TE)</span>
<span class="t " style="left:1685.75px;top:629.99px;font-size:13.75px;line-height:18px;color:#3d3d3d;letter-spacing:-0.468px;">NULL</span>
<div class="a " style="left:77px;top:653.75px;width:1730px;height:31.25px;background:#fff;border-bottom:1px solid #dfe4ec;"></div>
<div class="a " style="left:90px;top:660.15px;width:17px;height:17px;border:1px solid #55555b;background:#fff;"></div>
<svg width="24" height="20" style="left:126px;top:658px" viewBox="0 0 24 20"><g transform="translate(0.80 0.65)"><path d="M5.6 11.9 H1.4 Q0.6 11.9 0.6 11.1 V1.4 Q0.6 0.6 1.4 0.6 H5.6 L6.9 2.2 H14 Q14.8 2.2 14.8 3 V6" fill="none" stroke="#a3a3a3" stroke-width="1.15"/><path d="M6.4 8.4 H12.6 L13.9 6.6 H19.2 Q20 6.6 20 7.4 V15.9 Q20 16.7 19.2 16.7 H6.4 Q5.6 16.7 5.6 15.9 V9.2 Q5.6 8.4 6.4 8.4Z" fill="#fff" fill-opacity="0.9" stroke="#a3a3a3" stroke-width="1.15"/><path d="M3.6 6.9 Q6.2 3.6 9.6 5.6 Q11.4 7 11.6 9.6" fill="none" stroke="#8a8a8a" stroke-width="2.5"/><path d="M7.7 10.1 L14.5 8.7 L11.7 13.9 Z" fill="#8a8a8a"/></g></svg>
<svg width="26" height="26" style="left:147px;top:655px" viewBox="0 0 26 26"><g transform="translate(12.80 12.20) rotate(45)" fill="#8a8a8a"><path d="M-3 -6.5 V-9.5 Q-3 -10.7 -1.8 -10.7 H1.8 Q3 -10.7 3 -9.5 V-6.5 Z"/><path d="M-3 -5.6 H3 V6.0 L0.7 11.0 Q0 11.8 -0.7 11.0 L-3 6.0 Z"/><line x1="-1.0" y1="-4.8" x2="-1.0" y2="5.0" stroke="#c4c4c4" stroke-width="0.6"/><path d="M-1.5 6.6 L0 5.8 L1.5 6.6 L0 8.8 Z" fill="#fff"/></g></svg>
<svg width="20" height="20" style="left:173px;top:657px" viewBox="0 0 20 20"><g transform="translate(0.90 0.95)"><circle cx="9" cy="9" r="7.35" fill="none" stroke="#8a8a8a" stroke-width="2.4"/><polyline points="9.55,4.5 9.55,9.8 5.6,9.8" fill="none" stroke="#8a8a8a" stroke-width="1.6"/></g></svg>
<div class="a " style="left:249px;top:658.85px;width:20px;height:20px;border-radius:50%;background:#7b7b7b;"></div>
<span class="t " style="left:254.40px;top:661.09px;font-size:13.75px;line-height:18px;color:#fff;-webkit-text-stroke:0.20px #fff;">N</span>
<span class="t " style="left:356.25px;top:661.24px;font-size:13.75px;line-height:18px;color:#3d3d3d;letter-spacing:0.088px;">Material Certificates</span>
<span class="t " style="left:573.00px;top:661.24px;font-size:13.75px;line-height:18px;color:#3d3d3d;letter-spacing:0.212px;">A012</span>
<span class="t " style="left:723.25px;top:661.24px;font-size:13.75px;line-height:18px;color:#3d3d3d;letter-spacing:0.345px;">M01-028-01</span>
<span class="t " style="left:902.00px;top:661.24px;font-size:13.75px;line-height:18px;color:#3d3d3d;letter-spacing:0.125px;">Material Certificates</span>
<span class="t " style="left:1105.75px;top:661.24px;font-size:13.75px;line-height:18px;color:#3d3d3d;letter-spacing:0.625px;">M01</span>
<span class="t " style="left:1208.20px;top:661.24px;font-size:13.75px;line-height:18px;color:#3d3d3d;letter-spacing:-0.233px;">Generated (Sub-Supplier)</span>
<span class="t " style="left:1394.25px;top:661.24px;font-size:13.75px;line-height:18px;color:#3d3d3d;letter-spacing:0.070px;text-decoration:underline;text-underline-offset:0.6px;text-decoration-thickness:1px;">M01_A012</span>
<span class="t " style="left:1558.00px;top:661.24px;font-size:13.75px;line-height:18px;color:#3d3d3d;letter-spacing:-0.653px;">Tag No. (TE)</span>
<span class="t " style="left:1685.75px;top:661.24px;font-size:13.75px;line-height:18px;color:#3d3d3d;letter-spacing:-0.951px;">X+</span>
<div class="a " style="left:77px;top:685px;width:1730px;height:31.25px;background:#f4f4f4;"></div>
<div class="a " style="left:90px;top:691.4px;width:17px;height:17px;border:1px solid #55555b;background:#fff;"></div>
<svg width="26" height="26" style="left:123px;top:686px" viewBox="0 0 26 26"><g transform="translate(12.80 12.45) rotate(45)" fill="#8a8a8a"><path d="M-3 -6.5 V-9.5 Q-3 -10.7 -1.8 -10.7 H1.8 Q3 -10.7 3 -9.5 V-6.5 Z"/><path d="M-3 -5.6 H3 V6.0 L0.7 11.0 Q0 11.8 -0.7 11.0 L-3 6.0 Z"/><line x1="-1.0" y1="-4.8" x2="-1.0" y2="5.0" stroke="#c4c4c4" stroke-width="0.6"/><path d="M-1.5 6.6 L0 5.8 L1.5 6.6 L0 8.8 Z" fill="#fff"/></g></svg>
<svg width="20" height="20" style="left:150px;top:689px" viewBox="0 0 20 20"><g transform="translate(0.50 0.40)"><circle cx="9" cy="9" r="7.35" fill="none" stroke="#8a8a8a" stroke-width="2.4"/><polyline points="9.55,4.5 9.55,9.8 5.6,9.8" fill="none" stroke="#8a8a8a" stroke-width="1.6"/></g></svg>
<div class="a " style="left:249px;top:690.1px;width:20px;height:20px;border-radius:50%;background:#00914a;"></div>
<span class="t " style="left:254.60px;top:692.34px;font-size:13.75px;line-height:18px;color:#fff;-webkit-text-stroke:0.20px #fff;">Y</span>
<span class="t " style="left:356.25px;top:692.49px;font-size:13.75px;line-height:18px;color:#3d3d3d;letter-spacing:0.088px;">Material Certificates</span>
<span class="t " style="left:573.00px;top:692.49px;font-size:13.75px;line-height:18px;color:#3d3d3d;letter-spacing:0.212px;">A005</span>
<span class="t " style="left:723.25px;top:692.49px;font-size:13.75px;line-height:18px;color:#3d3d3d;letter-spacing:0.345px;">M01-021-01</span>
<span class="t " style="left:902.00px;top:692.49px;font-size:13.75px;line-height:18px;color:#3d3d3d;letter-spacing:0.125px;">Material Certificates</span>
<span class="t " style="left:1105.75px;top:692.49px;font-size:13.75px;line-height:18px;color:#3d3d3d;letter-spacing:0.625px;">M01</span>
<span class="t " style="left:1208.20px;top:692.49px;font-size:13.75px;line-height:18px;color:#3d3d3d;letter-spacing:-0.233px;">Generated (Sub-Supplier)</span>
<span class="t " style="left:1394.25px;top:692.49px;font-size:13.75px;line-height:18px;color:#3d3d3d;letter-spacing:0.070px;">M01_A005</span>
<span class="t " style="left:1558.00px;top:692.49px;font-size:13.75px;line-height:18px;color:#3d3d3d;letter-spacing:-0.653px;">Tag No. (TE)</span>
<span class="t " style="left:1685.75px;top:692.49px;font-size:13.75px;line-height:18px;color:#3d3d3d;letter-spacing:-0.468px;">NULL</span>
<div class="a " style="left:119px;top:367px;width:1px;height:35px;background:#d2d7df;"></div>
<div class="a " style="left:119px;top:405.25px;width:1px;height:29.75px;background:#dfe3ea;"></div>
<div class="a " style="left:119px;top:436.5px;width:1px;height:29.75px;background:#dfe3ea;"></div>
<div class="a " style="left:119px;top:467.75px;width:1px;height:29.75px;background:#dfe3ea;"></div>
<div class="a " style="left:119px;top:499px;width:1px;height:29.75px;background:#dfe3ea;"></div>
<div class="a " style="left:119px;top:530.25px;width:1px;height:29.75px;background:#dfe3ea;"></div>
<div class="a " style="left:119px;top:561.5px;width:1px;height:29.75px;background:#dfe3ea;"></div>
<div class="a " style="left:119px;top:592.75px;width:1px;height:29.75px;background:#dfe3ea;"></div>
<div class="a " style="left:119px;top:624px;width:1px;height:29.75px;background:#dfe3ea;"></div>
<div class="a " style="left:119px;top:655.25px;width:1px;height:29.75px;background:#dfe3ea;"></div>
<div class="a " style="left:119px;top:686.5px;width:1px;height:29.75px;background:#dfe3ea;"></div>
<div class="a " style="left:241px;top:367px;width:1px;height:35px;background:#d2d7df;"></div>
<div class="a " style="left:241px;top:405.25px;width:1px;height:29.75px;background:#dfe3ea;"></div>
<div class="a " style="left:241px;top:436.5px;width:1px;height:29.75px;background:#dfe3ea;"></div>
<div class="a " style="left:241px;top:467.75px;width:1px;height:29.75px;background:#dfe3ea;"></div>
<div class="a " style="left:241px;top:499px;width:1px;height:29.75px;background:#dfe3ea;"></div>
<div class="a " style="left:241px;top:530.25px;width:1px;height:29.75px;background:#dfe3ea;"></div>
<div class="a " style="left:241px;top:561.5px;width:1px;height:29.75px;background:#dfe3ea;"></div>
<div class="a " style="left:241px;top:592.75px;width:1px;height:29.75px;background:#dfe3ea;"></div>
<div class="a " style="left:241px;top:624px;width:1px;height:29.75px;background:#dfe3ea;"></div>
<div class="a " style="left:241px;top:655.25px;width:1px;height:29.75px;background:#dfe3ea;"></div>
<div class="a " style="left:241px;top:686.5px;width:1px;height:29.75px;background:#dfe3ea;"></div>
<div class="a " style="left:347px;top:367px;width:1px;height:35px;background:#d2d7df;"></div>
<div class="a " style="left:347px;top:405.25px;width:1px;height:29.75px;background:#dfe3ea;"></div>
<div class="a " style="left:347px;top:436.5px;width:1px;height:29.75px;background:#dfe3ea;"></div>
<div class="a " style="left:347px;top:467.75px;width:1px;height:29.75px;background:#dfe3ea;"></div>
<div class="a " style="left:347px;top:499px;width:1px;height:29.75px;background:#dfe3ea;"></div>
<div class="a " style="left:347px;top:530.25px;width:1px;height:29.75px;background:#dfe3ea;"></div>
<div class="a " style="left:347px;top:561.5px;width:1px;height:29.75px;background:#dfe3ea;"></div>
<div class="a " style="left:347px;top:592.75px;width:1px;height:29.75px;background:#dfe3ea;"></div>
<div class="a " style="left:347px;top:624px;width:1px;height:29.75px;background:#dfe3ea;"></div>
<div class="a " style="left:347px;top:655.25px;width:1px;height:29.75px;background:#dfe3ea;"></div>
<div class="a " style="left:347px;top:686.5px;width:1px;height:29.75px;background:#dfe3ea;"></div>
<div class="a " style="left:565px;top:367px;width:1px;height:35px;background:#d2d7df;"></div>
<div class="a " style="left:565px;top:405.25px;width:1px;height:29.75px;background:#dfe3ea;"></div>
<div class="a " style="left:565px;top:436.5px;width:1px;height:29.75px;background:#dfe3ea;"></div>
<div class="a " style="left:565px;top:467.75px;width:1px;height:29.75px;background:#dfe3ea;"></div>
<div class="a " style="left:565px;top:499px;width:1px;height:29.75px;background:#dfe3ea;"></div>
<div class="a " style="left:565px;top:530.25px;width:1px;height:29.75px;background:#dfe3ea;"></div>
<div class="a " style="left:565px;top:561.5px;width:1px;height:29.75px;background:#dfe3ea;"></div>
<div class="a " style="left:565px;top:592.75px;width:1px;height:29.75px;background:#dfe3ea;"></div>
<div class="a " style="left:565px;top:624px;width:1px;height:29.75px;background:#dfe3ea;"></div>
<div class="a " style="left:565px;top:655.25px;width:1px;height:29.75px;background:#dfe3ea;"></div>
<div class="a " style="left:565px;top:686.5px;width:1px;height:29.75px;background:#dfe3ea;"></div>
<div class="a " style="left:715px;top:367px;width:1px;height:35px;background:#d2d7df;"></div>
<div class="a " style="left:715px;top:405.25px;width:1px;height:29.75px;background:#dfe3ea;"></div>
<div class="a " style="left:715px;top:436.5px;width:1px;height:29.75px;background:#dfe3ea;"></div>
<div class="a " style="left:715px;top:467.75px;width:1px;height:29.75px;background:#dfe3ea;"></div>
<div class="a " style="left:715px;top:499px;width:1px;height:29.75px;background:#dfe3ea;"></div>
<div class="a " style="left:715px;top:530.25px;width:1px;height:29.75px;background:#dfe3ea;"></div>
<div class="a " style="left:715px;top:561.5px;width:1px;height:29.75px;background:#dfe3ea;"></div>
<div class="a " style="left:715px;top:592.75px;width:1px;height:29.75px;background:#dfe3ea;"></div>
<div class="a " style="left:715px;top:624px;width:1px;height:29.75px;background:#dfe3ea;"></div>
<div class="a " style="left:715px;top:655.25px;width:1px;height:29.75px;background:#dfe3ea;"></div>
<div class="a " style="left:715px;top:686.5px;width:1px;height:29.75px;background:#dfe3ea;"></div>
<div class="a " style="left:894px;top:367px;width:1px;height:35px;background:#d2d7df;"></div>
<div class="a " style="left:894px;top:405.25px;width:1px;height:29.75px;background:#dfe3ea;"></div>
<div class="a " style="left:894px;top:436.5px;width:1px;height:29.75px;background:#dfe3ea;"></div>
<div class="a " style="left:894px;top:467.75px;width:1px;height:29.75px;background:#dfe3ea;"></div>
<div class="a " style="left:894px;top:499px;width:1px;height:29.75px;background:#dfe3ea;"></div>
<div class="a " style="left:894px;top:530.25px;width:1px;height:29.75px;background:#dfe3ea;"></div>
<div class="a " style="left:894px;top:561.5px;width:1px;height:29.75px;background:#dfe3ea;"></div>
<div class="a " style="left:894px;top:592.75px;width:1px;height:29.75px;background:#dfe3ea;"></div>
<div class="a " style="left:894px;top:624px;width:1px;height:29.75px;background:#dfe3ea;"></div>
<div class="a " style="left:894px;top:655.25px;width:1px;height:29.75px;background:#dfe3ea;"></div>
<div class="a " style="left:894px;top:686.5px;width:1px;height:29.75px;background:#dfe3ea;"></div>
<div class="a " style="left:1097px;top:367px;width:1px;height:35px;background:#d2d7df;"></div>
<div class="a " style="left:1097px;top:405.25px;width:1px;height:29.75px;background:#dfe3ea;"></div>
<div class="a " style="left:1097px;top:436.5px;width:1px;height:29.75px;background:#dfe3ea;"></div>
<div class="a " style="left:1097px;top:467.75px;width:1px;height:29.75px;background:#dfe3ea;"></div>
<div class="a " style="left:1097px;top:499px;width:1px;height:29.75px;background:#dfe3ea;"></div>
<div class="a " style="left:1097px;top:530.25px;width:1px;height:29.75px;background:#dfe3ea;"></div>
<div class="a " style="left:1097px;top:561.5px;width:1px;height:29.75px;background:#dfe3ea;"></div>
<div class="a " style="left:1097px;top:592.75px;width:1px;height:29.75px;background:#dfe3ea;"></div>
<div class="a " style="left:1097px;top:624px;width:1px;height:29.75px;background:#dfe3ea;"></div>
<div class="a " style="left:1097px;top:655.25px;width:1px;height:29.75px;background:#dfe3ea;"></div>
<div class="a " style="left:1097px;top:686.5px;width:1px;height:29.75px;background:#dfe3ea;"></div>
<div class="a " style="left:1200px;top:367px;width:1px;height:35px;background:#d2d7df;"></div>
<div class="a " style="left:1200px;top:405.25px;width:1px;height:29.75px;background:#dfe3ea;"></div>
<div class="a " style="left:1200px;top:436.5px;width:1px;height:29.75px;background:#dfe3ea;"></div>
<div class="a " style="left:1200px;top:467.75px;width:1px;height:29.75px;background:#dfe3ea;"></div>
<div class="a " style="left:1200px;top:499px;width:1px;height:29.75px;background:#dfe3ea;"></div>
<div class="a " style="left:1200px;top:530.25px;width:1px;height:29.75px;background:#dfe3ea;"></div>
<div class="a " style="left:1200px;top:561.5px;width:1px;height:29.75px;background:#dfe3ea;"></div>
<div class="a " style="left:1200px;top:592.75px;width:1px;height:29.75px;background:#dfe3ea;"></div>
<div class="a " style="left:1200px;top:624px;width:1px;height:29.75px;background:#dfe3ea;"></div>
<div class="a " style="left:1200px;top:655.25px;width:1px;height:29.75px;background:#dfe3ea;"></div>
<div class="a " style="left:1200px;top:686.5px;width:1px;height:29.75px;background:#dfe3ea;"></div>
<div class="a " style="left:1386px;top:367px;width:1px;height:35px;background:#d2d7df;"></div>
<div class="a " style="left:1386px;top:405.25px;width:1px;height:29.75px;background:#dfe3ea;"></div>
<div class="a " style="left:1386px;top:436.5px;width:1px;height:29.75px;background:#dfe3ea;"></div>
<div class="a " style="left:1386px;top:467.75px;width:1px;height:29.75px;background:#dfe3ea;"></div>
<div class="a " style="left:1386px;top:499px;width:1px;height:29.75px;background:#dfe3ea;"></div>
<div class="a " style="left:1386px;top:530.25px;width:1px;height:29.75px;background:#dfe3ea;"></div>
<div class="a " style="left:1386px;top:561.5px;width:1px;height:29.75px;background:#dfe3ea;"></div>
<div class="a " style="left:1386px;top:592.75px;width:1px;height:29.75px;background:#dfe3ea;"></div>
<div class="a " style="left:1386px;top:624px;width:1px;height:29.75px;background:#dfe3ea;"></div>
<div class="a " style="left:1386px;top:655.25px;width:1px;height:29.75px;background:#dfe3ea;"></div>
<div class="a " style="left:1386px;top:686.5px;width:1px;height:29.75px;background:#dfe3ea;"></div>
<div class="a " style="left:1550px;top:367px;width:1px;height:35px;background:#d2d7df;"></div>
<div class="a " style="left:1550px;top:405.25px;width:1px;height:29.75px;background:#dfe3ea;"></div>
<div class="a " style="left:1550px;top:436.5px;width:1px;height:29.75px;background:#dfe3ea;"></div>
<div class="a " style="left:1550px;top:467.75px;width:1px;height:29.75px;background:#dfe3ea;"></div>
<div class="a " style="left:1550px;top:499px;width:1px;height:29.75px;background:#dfe3ea;"></div>
<div class="a " style="left:1550px;top:530.25px;width:1px;height:29.75px;background:#dfe3ea;"></div>
<div class="a " style="left:1550px;top:561.5px;width:1px;height:29.75px;background:#dfe3ea;"></div>
<div class="a " style="left:1550px;top:592.75px;width:1px;height:29.75px;background:#dfe3ea;"></div>
<div class="a " style="left:1550px;top:624px;width:1px;height:29.75px;background:#dfe3ea;"></div>
<div class="a " style="left:1550px;top:655.25px;width:1px;height:29.75px;background:#dfe3ea;"></div>
<div class="a " style="left:1550px;top:686.5px;width:1px;height:29.75px;background:#dfe3ea;"></div>
<div class="a " style="left:1677px;top:367px;width:1px;height:35px;background:#d2d7df;"></div>
<div class="a " style="left:1677px;top:405.25px;width:1px;height:29.75px;background:#dfe3ea;"></div>
<div class="a " style="left:1677px;top:436.5px;width:1px;height:29.75px;background:#dfe3ea;"></div>
<div class="a " style="left:1677px;top:467.75px;width:1px;height:29.75px;background:#dfe3ea;"></div>
<div class="a " style="left:1677px;top:499px;width:1px;height:29.75px;background:#dfe3ea;"></div>
<div class="a " style="left:1677px;top:530.25px;width:1px;height:29.75px;background:#dfe3ea;"></div>
<div class="a " style="left:1677px;top:561.5px;width:1px;height:29.75px;background:#dfe3ea;"></div>
<div class="a " style="left:1677px;top:592.75px;width:1px;height:29.75px;background:#dfe3ea;"></div>
<div class="a " style="left:1677px;top:624px;width:1px;height:29.75px;background:#dfe3ea;"></div>
<div class="a " style="left:1677px;top:655.25px;width:1px;height:29.75px;background:#dfe3ea;"></div>
<div class="a " style="left:1677px;top:686.5px;width:1px;height:29.75px;background:#dfe3ea;"></div>
<div class="a " style="left:1807px;top:367px;width:1px;height:368px;background:#d5dae2;"></div>
<svg width="14" height="12" style="left:1821px;top:430px" viewBox="0 0 14 12"><rect x="0.8" y="0.8" width="11.6" height="9.6" fill="none" stroke="#333" stroke-width="1.5"/><line x1="4.7" y1="3" x2="4.7" y2="11" stroke="#333" stroke-width="1.3"/><line x1="8.6" y1="3" x2="8.6" y2="11" stroke="#333" stroke-width="1.3"/><line x1="0.8" y1="2.4" x2="12.4" y2="2.4" stroke="#333" stroke-width="1.6"/></svg>
<span class="t" style="left:1834.6px;top:450.6px;font-size:13.75px;line-height:16px;color:#333;transform-origin:0 0;transform:rotate(90deg);letter-spacing:-0.35px">Columns</span>
<div class="a " style="left:77px;top:716px;width:1730px;height:19px;background:#fafafa;"></div>
<div class="a " style="left:100px;top:720px;width:829px;height:11px;background:#8b8b8b;border-radius:5.5px;"></div>
<svg width="1730" height="19" style="left:77px;top:716px" viewBox="77 716 1730 19"><polygon points="92.6,719.6 92.6,732 82.6,725.8" fill="#8a8a8a"/><polygon points="1792.2,719.6 1792.2,732 1801.6,725.8" fill="#8a8a8a"/></svg>
<div class="a " style="left:77px;top:735px;width:1768px;height:32px;background:#f2f4f9;border-top:1px solid #b6becc;"></div>
<span class="t " style="left:79.30px;top:743.84px;font-size:13.75px;line-height:18px;color:#3d3d3d;letter-spacing:-0.431px;">Select page:</span>
<div class="a " style="left:156px;top:741px;width:313px;height:22px;background:#fff;border:1px solid #c4c4c4;border-radius:2px;"></div>
<span class="t " style="left:160.00px;top:743.84px;font-size:13.75px;line-height:18px;color:#3d3d3d;letter-spacing:0.094px;">22-07-2025 11:13:39 - 22-07-2025 11:13:3...</span>
<span class="t " style="left:518.30px;top:743.84px;font-size:13.75px;line-height:18px;color:#3d3d3d;letter-spacing:-0.537px;">Show on page:</span>
<div class="a " style="left:609.3px;top:741px;width:50.4px;height:22px;background:#fff;border:1px solid #ccc;border-radius:3.5px;"></div>
<span class="t " style="left:615.60px;top:743.84px;font-size:13.75px;line-height:18px;color:#3d3d3d;letter-spacing:0.105px;">10</span>
<svg width="1770" height="33" style="left:77px;top:735px" viewBox="77 735 1770 33"><polyline points="451.6,750.4 456.2,755 460.8,750.4" fill="none" stroke="#124b78" stroke-width="2.9" stroke-linecap="round" stroke-linejoin="round"/><polyline points="644.8,750.4 649,754.8 653.2,750.4" fill="none" stroke="#333" stroke-width="2.3" stroke-linecap="round" stroke-linejoin="round"/><rect x="476.1" y="742" width="1" height="19.5" fill="#cfcfd2"/><rect x="511.0" y="742" width="1" height="19.5" fill="#cfcfd2"/><rect x="667.0" y="742" width="1" height="19.5" fill="#cfcfd2"/><rect x="1687.8" y="742" width="1" height="19.5" fill="#cfcfd2"/><rect x="498.65" y="749.75" width="4.3" height="4.3" fill="#cdc9c4" transform="rotate(45 500.80 751.90)"/><rect x="496.39" y="755.19" width="4.3" height="4.3" fill="#cdc9c4" transform="rotate(45 498.54 757.34)"/><rect x="490.95" y="757.45" width="4.3" height="4.3" fill="#cdc9c4" transform="rotate(45 493.10 759.60)"/><rect x="485.51" y="755.19" width="4.3" height="4.3" fill="#cdc9c4" transform="rotate(45 487.66 757.34)"/><rect x="483.25" y="749.75" width="4.3" height="4.3" fill="#cdc9c4" transform="rotate(45 485.40 751.90)"/><rect x="485.51" y="744.31" width="4.3" height="4.3" fill="#cdc9c4" transform="rotate(45 487.66 746.46)"/><rect x="490.95" y="742.05" width="4.3" height="4.3" fill="#cdc9c4" transform="rotate(45 493.10 744.20)"/><rect x="496.39" y="744.31" width="4.3" height="4.3" fill="#cdc9c4" transform="rotate(45 498.54 746.46)"/></svg>
<span class="t " style="left:675.20px;top:743.84px;font-size:13.75px;line-height:18px;color:#3d3d3d;letter-spacing:-0.373px;">Items on page: 10</span>
<span class="t " style="left:803.30px;top:743.84px;font-size:13.75px;line-height:18px;color:#3d3d3d;letter-spacing:-0.058px;">Total found: 88</span>
<div class="a " style="left:1508px;top:743px;width:18px;height:18px;border:1px solid #55555b;background:#fff;"></div>
<span class="t " style="left:1532.30px;top:743.84px;font-size:13.75px;line-height:18px;color:#3d3d3d;letter-spacing:-0.293px;">Select all (this page only)</span>
<div class="a " style="left:1698px;top:743px;width:17px;height:18px;border:1px solid #55555b;background:#fff;"></div>
<span class="t " style="left:1722.30px;top:743.84px;font-size:13.75px;line-height:18px;color:#3d3d3d;letter-spacing:-0.420px;">Select all (all pages)</span>
<div class="a " style="left:76.2px;top:783.8px;width:15.6px;height:15.6px;border-radius:50%;background:#124b78;"></div>
<span class="t " style="left:79.60px;top:781.70px;font-size:15.00px;line-height:20px;color:#fff;font-weight:bold;-webkit-text-stroke:0.30px #fff;">?</span>
<span class="t " style="left:96.70px;top:783.10px;font-size:15.00px;line-height:20px;color:#3d3d3d;letter-spacing:-0.018px;">Grid row colors</span>
<svg width="1920" height="882" style="left:0;top:0;pointer-events:none" viewBox="0 0 1920 882"><defs><filter id="ash" x="-20%" y="-40%" width="140%" height="200%"><feDropShadow dx="1.5" dy="3" stdDeviation="2.1" flood-color="#2a2f33" flood-opacity="0.7"/></filter></defs><path d="M1611.49 301.31 L1679.79 322.68 L1678.00 326.60 L1694.60 323.70 L1682.60 312.10 L1681.41 317.32 L1612.71 297.29 A2.10 2.10 0 0 0 1611.49 301.31 Z" fill="#fd4045" filter="url(#ash)"/><path d="M336.41 460.20 L287.56 470.32 L286.20 466.10 L273.80 476.10 L289.90 480.60 L288.84 476.08 L337.39 464.60 A2.25 2.25 0 0 0 336.41 460.20 Z" fill="#fd4045" filter="url(#ash)"/><path d="M1838.9 349.6 q0 -1.2 1.2 -1.2 q1.2 0 1.2 1.2 v5.4 q1.3 -1.1 2.5 0 q1.4 -0.9 2.6 0.3 q2.3 -0.3 2.3 1.8 v6.5 q0 4 -2.2 6.2 l-6.6 0 q-2.2 -1.6 -3.8 -4.6 l-2.6 -4 q-0.8 -1.4 0.4 -1.8 q1.2 -0.3 2.2 0.9 l2.8 2.6 Z" fill="#fff" stroke="#000" stroke-width="1.1" stroke-linejoin="round"/><path d="M1843.8 355.3 v4.6 M1846.4 355.6 v4.3" stroke="#000" stroke-width="1" fill="none"/></svg>
<div class="a " style="left:1696px;top:318px;width:160px;height:46px;border:2px solid #fd3037;"></div>
<div class="a " style="left:0px;top:0px;width:1920px;height:1px;background:#b3aeaa;"></div>
<div class="a " style="left:0px;top:0px;width:1px;height:882px;background:#a0a0a0;"></div>
<div class="a " style="left:1919px;top:0px;width:1px;height:882px;background:#a0a0a0;"></div>
<div class="a " style="left:0px;top:881px;width:1920px;height:1px;background:#a0a0a0;"></div>
</body></html>
